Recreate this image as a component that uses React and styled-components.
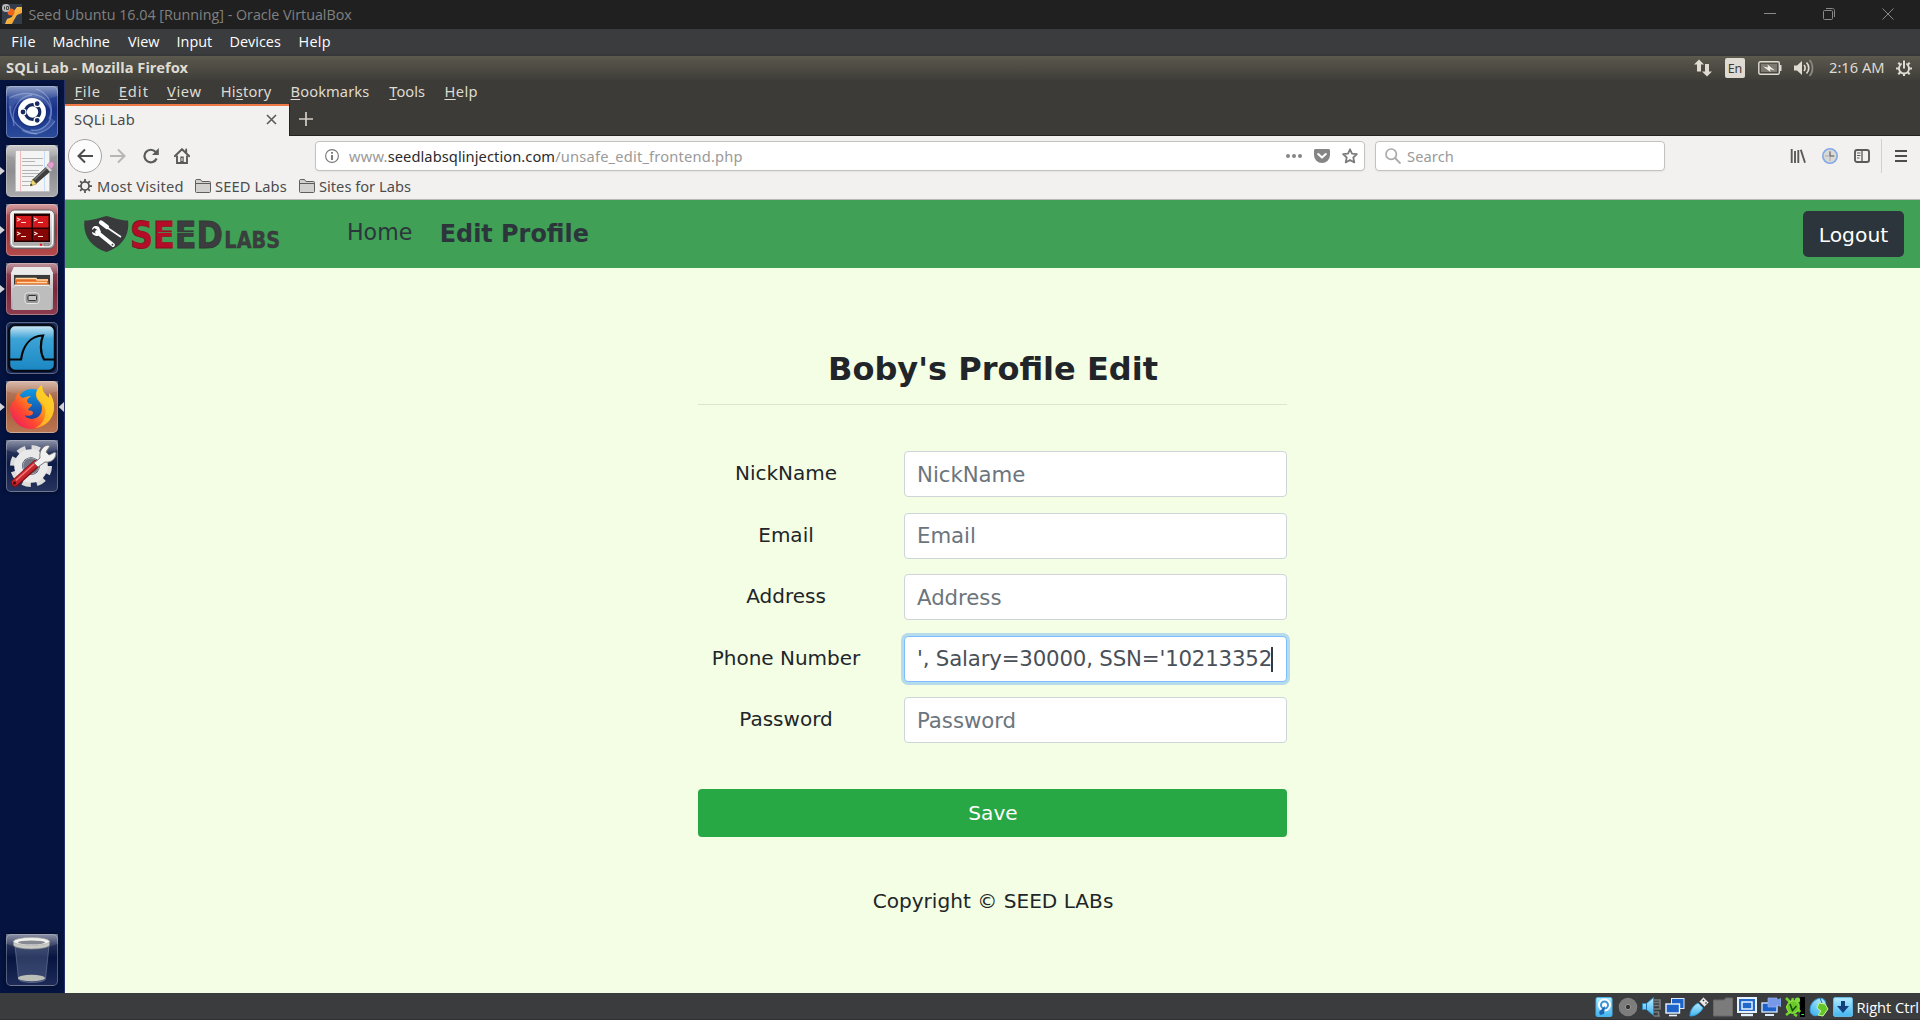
import React from "react";
import styled, { createGlobalStyle } from "styled-components";

const UI = '"Noto Sans", "Open Sans", sans-serif';
const WIN = '"Open Sans", "Noto Sans", sans-serif';
const PAGE = '"DejaVu Sans", sans-serif';

const Global = createGlobalStyle`
  *, *::before, *::after { box-sizing: border-box; }
  body { margin: 0; background: #3b3c3e; overflow: hidden; }
  svg { display: block; flex: none; }
`;

const Window = styled.div`
  width: 1920px;
  height: 1020px;
  display: flex;
  flex-direction: column;
  overflow: hidden;
  white-space: nowrap;
`;

/* host window */
const TitleBar = styled.header`
  height: 29px;
  flex: none;
  display: flex;
  align-items: center;
  padding: 0 26px 0.5px 2px;
  background: #202020;
  color: #808080;
  font: 14.3px ${WIN};
`;
const TitleText = styled.span`
  margin-left: 6.5px;
  flex: 1;
`;
const WindowButtons = styled.div`
  display: flex;
  gap: 47px;
`;
const HostMenu = styled.nav`
  height: 27px;
  flex: none;
  display: flex;
  align-items: center;
  padding: 0 0 0 11.3px;
  background: #3b3c3e;
  border-bottom: 2px solid #363739;
  color: #fff;
  font: 14.4px ${WIN};
`;
const MenuItem = styled.span`
  width: ${(p) => p.$w}px;
  letter-spacing: ${(p) => p.$ls || 0}px;
`;

/* guest desktop */
const Panel = styled.header`
  height: 24px;
  flex: none;
  display: flex;
  align-items: center;
  padding: 0 8px 2px 6px;
  background: linear-gradient(#5c594f 0, #555349 20%, #3f3e39 100%);
  color: #dfdbd2;
  font: 14.67px ${UI};
`;
const PanelTitle = styled.b`
  flex: 1;
  letter-spacing: 0.05px;
`;
const Indicators = styled.div`
  display: flex;
  align-items: center;
  svg, i { position: relative; top: 1px; }
`;
const Lang = styled.i`
  width: 20px;
  height: 20px;
  margin: 0 13px;
  border-radius: 2px;
  background: #dfdbd2;
  color: #3c3b37;
  font-size: 12.5px;
  font-style: normal;
  line-height: 21px;
  text-align: center;
`;
const Clock = styled.span`
  margin: 0 12px 0 15px;
  width: 55px;
`;
const Desktop = styled.div`
  flex: 1;
  min-height: 0;
  display: flex;
`;
const Launcher = styled.aside`
  width: 65px;
  flex: none;
  display: flex;
  flex-direction: column;
  gap: 7px;
  padding: 6px 0 7px;
  background: #04133f;
  border-right: 1px solid #27306a;
`;
const Slot = styled.div`
  height: 52px;
  display: flex;
  align-items: center;
  margin-top: ${(p) => (p.$bottom ? "auto" : 0)};
`;
const Mark = styled.span`
  width: 6px;
  height: 10px;
  flex: none;
  background: ${(p) => (p.$on ? "#d4d4d8" : "transparent")};
  clip-path: ${(p) =>
    p.$right ? "polygon(100% 0, 100% 100%, 12% 50%)" : "polygon(0 10%, 80% 50%, 0 90%)"};
`;
const Tile = styled.div`
  width: 52px;
  height: 52px;
  border-radius: 5px;
  border: 1px solid rgba(255, 255, 255, 0.28);
  background: ${(p) => p.$bg};
  box-shadow: 0 0 4px rgba(0, 0, 0, 0.5);
  svg { margin: -1px; }
`;

/* browser */
const Browser = styled.main`
  flex: 1;
  min-width: 0;
  display: flex;
  flex-direction: column;
  background: #f4fee4;
`;
const FxMenu = styled.nav`
  height: 23px;
  flex: none;
  display: flex;
  align-items: center;
  padding: 0 0 2px 9.4px;
  background: #3c3b37;
  color: #dfdbd2;
  font: 14.67px ${UI};
  u { text-underline-offset: 2px; text-decoration-thickness: 1px; }
`;
const TabStrip = styled.div`
  height: 33px;
  flex: none;
  display: flex;
  align-items: stretch;
  background: #3c3b37;
`;
const Tab = styled.div`
  width: 224px;
  display: flex;
  align-items: center;
  justify-content: space-between;
  padding: 0 12px 2px 9px;
  margin-top: 0.5px;
  border-top: 2px solid #f07746;
  background: #f2f1f0;
  color: #4c4c4c;
  font: 14.67px ${UI};
  line-height: 18px;
  letter-spacing: 0.15px;
`;
const TabLabel = styled.span`
  padding-bottom: 2px;
`;
const TabRest = styled.div`
  flex: 1;
  display: flex;
  align-items: center;
  padding: 0 0 0 9px;
  border-left: 1px solid #242320;
  border-bottom: 1px solid #242320;
`;
const Toolbar = styled.div`
  height: 38px;
  flex: none;
  display: flex;
  align-items: center;
  padding: 2px 13px 0 3px;
  background: #f2f1f0;
`;
const BackButton = styled.span`
  width: 34px;
  height: 34px;
  border-radius: 50%;
  border: 1px solid #a5a4a3;
  background: #fcfcfc;
  display: flex;
  align-items: center;
  justify-content: center;
`;
const NavIcons = styled.div`
  display: flex;
  align-items: center;
  gap: 15.5px;
  width: 213px;
  padding-left: 7px;
`;
const InputBar = styled.div`
  height: 30px;
  width: ${(p) => p.$w}px;
  margin-left: ${(p) => p.$ml || 0}px;
  display: flex;
  align-items: center;
  padding: 0 ${(p) => p.$pr || 0}px 0 9px;
  border: 1px solid #c4c2bf;
  border-radius: 4px;
  background: #fff;
  box-shadow: 0 1px 2px rgba(0, 0, 0, 0.06);
  color: #9a9a9a;
  font: 14.67px ${UI};
`;
const Url = styled.span`
  flex: 1;
  margin-left: 10px;
  letter-spacing: 0.19px;
  b { font-weight: 400; color: #2b2b2b; letter-spacing: 0.07px; }
`;
const BarIcons = styled.span`
  display: flex;
  align-items: center;
  gap: 12px;
`;
const SearchHint = styled.span`
  margin-left: 6px;
  letter-spacing: 0.1px;
`;
const RightTools = styled.div`
  margin-left: auto;
  display: flex;
  align-items: center;
  gap: 16px;
`;
const Divider = styled.span`
  width: 1px;
  height: 34px;
  margin: 0 -3px 0 -5px;
  background: #d2d1d0;
`;
const Bookmarks = styled.div`
  height: 26px;
  flex: none;
  display: flex;
  align-items: center;
  padding: 0 0 2px 13px;
  background: #f2f1f0;
  border-bottom: 1px solid #b9b8b6;
  color: #4c4c4c;
  font: 14.67px ${UI};
`;
const Bookmark = styled.span`
  display: flex;
  align-items: center;
  gap: ${(p) => p.$gap || 3}px;
  width: ${(p) => p.$w}px;
  letter-spacing: ${(p) => p.$ls}px;
`;

/* page */
const SiteNav = styled.nav`
  height: 68px;
  flex: none;
  display: flex;
  align-items: center;
  padding: 0 16px 0 19px;
  background: #40a055;
  color: #2c353c;
  font-family: ${PAGE};
`;
const HomeLink = styled.span`
  margin: -4px 27.5px 0 59px;
  font-size: 22.1px;
`;
const EditLink = styled.b`
  font-size: 23.9px;
  flex: 1;
`;
const Logout = styled.button`
  width: 101px;
  height: 46px;
  padding: 1px 0 0;
  border: 0;
  border-radius: 5px;
  background: #2c353c;
  color: #fff;
  font: 20.3px ${PAGE};
`;
const Form = styled.form`
  width: 589px;
  margin: 0 auto;
  padding-top: 82px;
  color: #212529;
  font: 20px/24px ${PAGE};
`;
const Heading = styled.h1`
  margin: 0 0 16px;
  padding-left: 1px;
  font-size: 32px;
  line-height: 38px;
  text-align: center;
`;
const Rule = styled.hr`
  margin: 0 0 46px;
  border: 0;
  height: 1px;
  background: #dbe6cd;
`;
const Row = styled.div`
  display: flex;
  justify-content: space-between;
  margin-bottom: 15.5px;
`;
const Label = styled.label`
  width: 176px;
  padding-top: 10px;
  text-align: center;
`;
const Field = styled.div`
  width: 383px;
  height: 46px;
  display: flex;
  align-items: center;
  padding: 1.4px 12px 0;
  border: 1px solid ${(p) => (p.$focus ? "#80bdff" : "#ced4da")};
  border-radius: 4px;
  background: #fff;
  box-shadow: ${(p) => (p.$focus ? "0 0 0 3px #b6dbea" : "none")};
  color: ${(p) => (p.$focus ? "#495057" : "#6c757d")};
  font-size: 21.3px;
  letter-spacing: ${(p) => (p.$focus ? -0.18 : -0.05)}px;
`;
const Caret = styled.i`
  width: 2px;
  height: 25px;
  flex: none;
  margin-left: -1px;
  background: #343a40;
`;
const Save = styled.button`
  width: 100%;
  height: 48px;
  margin-top: 30px;
  padding: 0 0 0 1px;
  border: 0;
  border-radius: 4px;
  background: #28a745;
  color: #fff;
  font: 20.1px ${PAGE};
`;
const Copyright = styled.p`
  margin: 52px 0 0;
  padding-left: 1px;
  text-align: center;
  font-size: 20.1px;
`;

const StatusBar = styled.footer`
  height: 27px;
  flex: none;
  display: flex;
  align-items: center;
  justify-content: flex-end;
  gap: 3.9px;
  padding-top: 1px;
  border-bottom: 1px solid #303132;
  background: #3b3c3e;
  color: #fff;
  font: 14.7px ${WIN};
`;
const HostKey = styled.span`
  width: 63.5px;
  letter-spacing: -0.05px;
`;

const Svg = ({ w = 16, h = w, vb, children, ...rest }) => (
  <svg width={w} height={h} viewBox={vb || `0 0 ${w} ${h}`} fill="none" {...rest}>{children}</svg>
);

const Shine = () => <ellipse cx="26" cy="0" rx="34" ry="15" fill="url(#shine)" />;

const HiddenDefs = styled.svg`
  position: absolute;
`;
const Defs = () => (
  <HiddenDefs width="0" height="0">
    <defs>
      <linearGradient id="shine" x1="0" y1="0" x2="0" y2="1"><stop offset=".4" stopColor="#fff" stopOpacity=".5" /><stop offset="1" stopColor="#fff" stopOpacity="0" /></linearGradient>
      <linearGradient id="metal" x1="0" y1="0" x2="0" y2="1"><stop offset="0" stopColor="#ededed" /><stop offset="1" stopColor="#a3a3a3" /></linearGradient>
      <linearGradient id="shark" x1="0" y1="0" x2="0" y2="1"><stop offset="0" stopColor="#d5ecf8" /><stop offset=".3" stopColor="#3ca3d6" /><stop offset="1" stopColor="#1a86c2" /></linearGradient>
      <linearGradient id="fox" x1="1" y1="0" x2="0" y2="1"><stop offset="0" stopColor="#ffe226" /><stop offset=".4" stopColor="#ff9a1a" /><stop offset=".65" stopColor="#ff4a30" /><stop offset="1" stopColor="#e4126c" /></linearGradient>
      <linearGradient id="globe" x1="0" y1="0" x2="0" y2="1"><stop offset="0" stopColor="#0a9be6" /><stop offset="1" stopColor="#1c3f9c" /></linearGradient>
      <linearGradient id="sky" x1="0" y1="0" x2="0" y2="1"><stop offset="0" stopColor="#b5ebff" /><stop offset="1" stopColor="#41b4ee" /></linearGradient>
      <linearGradient id="vbox" x1="0" y1="0" x2="1" y2="1"><stop offset="0" stopColor="#ffdc70" /><stop offset="1" stopColor="#f08a15" /></linearGradient>
    </defs>
  </HiddenDefs>
);

const DashIcon = () => (
  <Svg w={52}>
    <g stroke="#a9bde6" strokeOpacity=".45" strokeWidth="1.3">
      <path d="M3 12C18 4 42 6 45 24c2 14-10 22-20 20M8 40C4 22 14 10 26 9M49 35C42 46 28 52 16 44" />
      <path d="M30 3c13 4 19 18 13 30M4 20c-1 16 12 26 27 28" />
    </g>
    <path d="M3 12C18 4 42 6 45 24c-6-10-20-14-34-8 -4 4-5 8-5 15C3 25 2 18 3 12zM49 35C42 46 28 52 16 44c10 2 24-1 29-12z" fill="#9db5e6" fillOpacity=".22" />
    <circle cx="26" cy="26.5" r="15" fill="#0a1c55" fillOpacity=".35" />
    <circle cx="26" cy="26" r="14" fill="#fff" />
    <circle cx="26.5" cy="26" r="7.3" stroke="#172b63" strokeWidth="3.2" />
    <g fill="#172b63" stroke="#fff" strokeWidth="1.2"><circle cx="17" cy="26" r="3" /><circle cx="31.2" cy="17.7" r="3" /><circle cx="31.2" cy="34.3" r="3" /></g>
    <Shine />
  </Svg>
);
const EditorIcon = () => (
  <Svg w={52}>
    <Shine />
    <rect x="9.5" y="5.5" width="34" height="41" fill="#f4f4f4" stroke="#bfbfbf" />
    <path d="M14.5 6v40" stroke="#f6b9b9" /><path d="M38.5 6v40" stroke="#c5def5" />
    <path d="M16 13.5h21M16 16.5h13M16 20.5h21M16 25.5h17M16 28.5h18M16 31.5h12M16 36.5h11M16 40.5h7" stroke="#b4b4b4" />
    <path d="M26 35l15-14 4 5-15 13z" fill="#3e3e3e" /><path d="M28.5 34.5l13.500-12.500" stroke="#777" strokeWidth="1.5" />
    <path d="M24 41l2.500-6.500 4 4.500z" fill="#f0dc75" stroke="#8f8130" strokeWidth=".6" /><path d="M24 41l1-2.600 1.600 1.800z" fill="#222" />
    <path d="M39.5 22l2-2 4.500 5-2 2z" fill="#d5d5d5" /><path d="M41 20c2-3 5-4 6-3 1.600 1 1.600 4-1.500 7z" fill="#e3a0cf" stroke="#b06d9c" strokeWidth=".6" />
  </Svg>
);
const TerminalIcon = () => (
  <Svg w={52}>
    <Shine />
    <rect x="3.5" y="6" width="45" height="38.5" rx="5" fill="url(#metal)" stroke="#646464" />
    <rect x="5.5" y="8" width="41" height="34.5" rx="4" stroke="#f7f7f7" strokeWidth="1.3" />
    <rect x="8" y="9.5" width="36" height="28.5" fill="#240000" />
    <path d="M10 12h15.500v11.500H10zM27 12h15.500v11.500H27z" fill="#d3191c" /><path d="M10 25h15.500v11.500H10zM27 25h15.500v11.500H27z" fill="#850404" />
    <path d="M11 14l3 1.500-3 1.500M15 18.500h5M28 14l3 1.500-3 1.500M32 18.500h5M11 28l3 1.500-3 1.500M15 32.500h5M28 28l3 1.500-3 1.500M32 32.500h5" stroke="#ffdede" strokeWidth="1.1" />
    <circle cx="35" cy="40.7" r="1.2" fill="#f11" /><path d="M38 39.700h5v2h-5z" stroke="#777" strokeWidth=".7" />
  </Svg>
);
const FilesIcon = () => (
  <Svg w={52}>
    <Shine />
    <path d="M8 4h36l3 6v36H5V10z" fill="url(#metal)" /><path d="M8 4h36l3 7H5z" fill="#eaeaea" />
    <rect x="8" y="12" width="36" height="12" fill="#3a3a3a" />
    <path d="M9 16h33l1 8H9z" fill="#e66a1f" /><path d="M9.500 15.500H30l1 1.500h11M11 19.500h30" stroke="#ffd9a8" strokeWidth="1.3" />
    <path d="M6.500 24.500c0-3 1.500-3 3-3h33c2 0 3 0 3 3V47h-39z" fill="#bdbdbd" /><path d="M7 24.500l2-2h34l2 2" stroke="#efefef" />
    <rect x="19" y="30" width="14" height="10.5" rx="2.5" fill="#989898" stroke="#e9e9e9" /><rect x="22" y="32.5" width="8.5" height="5" rx="1" fill="#c4c4c4" stroke="#353535" />
  </Svg>
);
const SharkIcon = () => (
  <Svg w={52}>
    <rect x="3" y="3" width="46" height="46" rx="6" fill="url(#shark)" stroke="#070b16" strokeWidth="2.5" />
    <path d="M3 37.500h12C17 24 24 14 37 13.500c-3 7-3 17 1 24h11" stroke="#070707" strokeWidth="2.2" />
  </Svg>
);
const FirefoxIcon = () => (
  <Svg w={52}>
    <Shine />
    <circle cx="26" cy="23" r="15" fill="url(#globe)" />
    <path d="M36 4c-6 4-7 9-5 14 2 3 5 5 5 9 0 7-5 11-10 11-4 0-7-2-7-4 4 2 8 0 8-2 0-3-4-2-5-3 1-3 4-3 4-6-3 0-5-1-5-4 1-2 3-3 4-4-3 0-6 1-8 2-3-1-4-3-4-6-2 2-4 5-4 8C5 22 3 26 5 33c3 9 11 15 20 15 13 0 23-9 23-22 0-6-2-11-5-14v5c-3-3-7-6-7-13z" fill="url(#fox)" />
    <path d="M36 4c-6 4-7 9-4 14 4 5 9 7 7 17-1 5-5 10-10 12 11-1 19-10 19-21 0-6-2-11-5-14v5c-3-3-7-6-7-13z" fill="#ffd42a" fillOpacity=".7" />
  </Svg>
);
const SettingsIcon = () => (
  <Svg w={52}>
    <Shine />
    <circle cx="25" cy="26" r="18.5" stroke="#dcdcdc" strokeWidth="5" strokeDasharray="8.5 6.03" />
    <circle cx="25" cy="26" r="12.8" stroke="#e9e9e9" strokeWidth="8" /><circle cx="25" cy="26" r="8" stroke="#a8a8a8" fill="#707684" />
    <path d="M9 43L30 24" stroke="#7d1118" strokeWidth="8" strokeLinecap="round" /><path d="M9 42.500L30 23.500" stroke="#c9252c" strokeWidth="6" strokeLinecap="round" />
    <path d="M10 40.500L28 24" stroke="#ee7b7d" strokeWidth="1.5" /><circle cx="8.5" cy="43" r="1.6" fill="#3d0a0d" />
    <path d="M28 23l6-5c-1-6 2-12 8-13l2 1-4 6 3 3 6-3 1 1c0 6-5 10-11 9l-7 5z" fill="#f1f1f1" stroke="#777" />
  </Svg>
);
const TrashIcon = () => (
  <Svg w={52}>
    <Shine />
    <path d="M9 12h34l-3.500 33a13.500 3.500 0 0 1-27 0z" fill="#9ba9c9" fillOpacity=".26" stroke="#aab4cc" strokeOpacity=".35" />
    <ellipse cx="25.5" cy="44" rx="13.5" ry="3.3" fill="#bebeb9" />
    <path d="M7.500 7.500v3.500a18 4 0 0 0 36 0V7.500z" fill="#c9c9c6" stroke="#8e8e8c" strokeWidth=".7" />
    <ellipse cx="25.5" cy="7.5" rx="18" ry="4" fill="#f0f0ed" stroke="#acacaa" strokeWidth=".7" /><ellipse cx="25.5" cy="8.5" rx="13.5" ry="2" fill="#868991" />
  </Svg>
);

const launcher = [
  [DashIcon, "linear-gradient(#3a569c,#17308a 45%,#2b4b9a)", 0, 0],
  [EditorIcon, "linear-gradient(#aaa9ab,#8e8d91 50%,#a9a8aa)", 1, 0],
  [TerminalIcon, "linear-gradient(#b4575c,#a13238 50%,#b44a4c)", 1, 0],
  [FilesIcon, "linear-gradient(#8f4757,#79283a 50%,#8c3c4e)", 1, 0],
  [SharkIcon, "#1b2b5b", 0, 0],
  [FirefoxIcon, "linear-gradient(#b98871,#a45c3a 50%,#b97652)", 1, 1],
  [SettingsIcon, "linear-gradient(#3a4468,#0c1a46 45%,#27345e)", 0, 0],
];

const Logo = () => (
  <Svg w={204} h={60}>
    <g transform="translate(0 11)">
      <path d="M.5 5.500C9 5.500 15 3 22.500 1 30 3 36 5.500 44 5.500 46 20 38 32 22.500 37 7 32-1.500 20 .5 5.500z" fill="#383a3c" />
      <path d="M17 7.500l6 4.500" stroke="#fff" strokeWidth="4.2" strokeLinecap="round" /><path d="M23 12.500l14 9.500" stroke="#fff" strokeWidth="1.6" />
      <path d="M13 17l16 13" stroke="#fff" strokeWidth="3.8" strokeLinecap="round" /><path d="M8 15c0-4 4-5 7-3l2 5-3 4c-4 0-6-2-6-4l4 1.500 2-3L10.500 13z" fill="#fff" /><circle cx="28.5" cy="29.7" r=".9" fill="#383a3c" />
    </g>
    <g transform="scale(.838 1)" fontFamily="DejaVu Sans, sans-serif" fontWeight="700">
      <text x="54.9" y="43.7" fontSize="38" fill="#3b3d3f" stroke="#2f3a34" strokeWidth=".8"><tspan fill="#b50d28" stroke="#8c1022">SE</tspan>ED</text>
      <text x="167.5" y="43.7" fontSize="23" fill="#3b3d3f" stroke="#2f3a34" strokeWidth=".4">LABS</text>
    </g>
    <path d="M74 28.500h41" stroke="#40a055" strokeOpacity=".75" />
  </Svg>
);

const FolderIcon = () => (
  <Svg w={16} h={14}><path d="M.5 12.500V1.500C.5 1 1 .5 1.500.5h4l1.500 2h7.500c.6 0 1 .4 1 1v9c0 .6-.4 1-1 1h-13c-.6 0-1-.4-1-1zM.5 4.500h15" fill="#d2d1cf" stroke="#5e5e5e" /></Svg>
);
const PowerGear = () => (
  <Svg w={16}>
    <circle cx="8" cy="8.5" r="5" stroke="#dfdbd2" strokeWidth="1.9" />
    <path d="M8 13v3M0 8.500h3M13 8.500h3M2.300 2.800l2 2M11.700 12.200l2 2M13.700 2.800l-2 2M4.300 12.200l-2 2" stroke="#dfdbd2" strokeWidth="2.1" />
    <path d="M8 0v9" stroke="#4b4942" strokeWidth="4.5" /><path d="M8 .5v8" stroke="#dfdbd2" strokeWidth="2" />
  </Svg>
);

const fields = ["NickName", "Email", "Address", "Phone Number", "Password"];

export default function App() {
  return (
    <Window>
      <Global />
      <Defs />
      <TitleBar>
        <Svg w={20}>
          <rect width="20" height="20" fill="#343d4c" /><path d="M3 20l2-5 5-2 2-6 3-4h5v6l-5 2-3 5-2 4z" fill="url(#vbox)" />
          <circle cx="9" cy="8" r="3.5" fill="#ef641b" /><circle cx="4" cy="4" r="4" fill="#b8b8b8" /><path d="M2.500 2.500v3M4.500 2.500h2v3h-2z" stroke="#444" />
        </Svg>
        <TitleText>Seed Ubuntu 16.04 [Running] - Oracle VirtualBox</TitleText>
        <WindowButtons>
          <Svg w={12}><path d="M0 5.500h12" stroke="#8a8a8a" /></Svg>
          <Svg w={12}><path d="M.5 3.500c0-.6.4-1 1-1h7c.6 0 1 .4 1 1v7c0 .6-.4 1-1 1h-7c-.6 0-1-.4-1-1zM3 .5h6.500c1.200 0 2 .8 2 2V9" stroke="#8a8a8a" /></Svg>
          <Svg w={12}><path d="M.5.5l11 11M11.500.5l-11 11" stroke="#8a8a8a" /></Svg>
        </WindowButtons>
      </TitleBar>
      <HostMenu>
        <MenuItem $w={41.3} $ls={0.5}>File</MenuItem>
        <MenuItem $w={75.4}>Machine</MenuItem>
        <MenuItem $w={48.6}>View</MenuItem>
        <MenuItem $w={53}>Input</MenuItem>
        <MenuItem $w={69}>Devices</MenuItem>
        <MenuItem $w={40} $ls={0.3}>Help</MenuItem>
      </HostMenu>
      <Panel>
        <PanelTitle>SQLi Lab - Mozilla Firefox</PanelTitle>
        <Indicators>
          <Svg w={18}><path d="M5 .500l5 5H7v7H3v-7H0zM13 17.500l-5-5h3V5h4v7.500h3z" fill="#dfdbd2" /></Svg>
          <Lang>En</Lang>
          <Svg w={24} h={14}>
            <rect x=".8" y=".8" width="20.5" height="12.4" rx="1.5" stroke="#dfdbd2" strokeWidth="1.4" /><rect x="3" y="3" width="16" height="8" fill="#7d7a72" /><path d="M22.500 4v6" stroke="#dfdbd2" strokeWidth="2" />
            <path d="M5 5.500l5 1-.5-3L17 9.500l-5-1.200.5 2.700z" fill="#f1ede4" />
          </Svg>
          <Svg w={32} h={18} vb="-12 0 32 18"><path d="M0 6.500h3l5-4.500v14l-5-4.500H0z" fill="#dfdbd2" /><path d="M10 6c1.500 1.500 1.500 4.500 0 6M12.500 3.500c3 3 3 8 0 11" stroke="#dfdbd2" strokeWidth="1.7" /><path d="M15.500 1c4 4 4 12 0 16" stroke="#8b887f" strokeWidth="1.7" /></Svg>
          <Clock>2:16 AM</Clock>
          <PowerGear />
        </Indicators>
      </Panel>
      <Desktop>
        <Launcher>
          {launcher.map(([Icon, bg, left, right], i) => (
            <Slot key={i}><Mark $on={left} /><Tile $bg={bg}><Icon /></Tile><Mark $on={right} $right /></Slot>
          ))}
          <Slot $bottom><Mark /><Tile $bg="linear-gradient(#3a4468,#06143f 45%,#1d2a58)"><TrashIcon /></Tile></Slot>
        </Launcher>
        <Browser>
          <FxMenu>
            <MenuItem $w={44.3} $ls={0.7}><u>F</u>ile</MenuItem>
            <MenuItem $w={48.4} $ls={1}><u>E</u>dit</MenuItem>
            <MenuItem $w={53.6} $ls={0.6}><u>V</u>iew</MenuItem>
            <MenuItem $w={69.9} $ls={0.2}>Hi<u>s</u>tory</MenuItem>
            <MenuItem $w={98.8} $ls={0.1}><u>B</u>ookmarks</MenuItem>
            <MenuItem $w={55.1}><u>T</u>ools</MenuItem>
            <MenuItem $w={40} $ls={0.4}><u>H</u>elp</MenuItem>
          </FxMenu>
          <TabStrip>
            <Tab><TabLabel>SQLi Lab</TabLabel><Svg w={11}><path d="M1 1l9 9M10 1l-9 9" stroke="#5a5a5a" strokeWidth="1.6" /></Svg></Tab>
            <TabRest><Svg w={14}><path d="M7 0v14M0 7h14" stroke="#d3cfc6" strokeWidth="1.7" /></Svg></TabRest>
          </TabStrip>
          <Toolbar>
            <BackButton><Svg w={18}><path d="M17 9H2.500M9 2.500L2.500 9 9 15.500" stroke="#4c4c4c" strokeWidth="2" /></Svg></BackButton>
            <NavIcons>
              <Svg w={18}><path d="M1 9h14.500M9 2.500L15.500 9 9 15.500" stroke="#b7b6b5" strokeWidth="2" /></Svg>
              <Svg w={16}><path d="M13.600 10.500A6.300 6.300 0 1 1 12.600 4" stroke="#5a5a5a" strokeWidth="2.2" /><path d="M15.800 0v7H9z" fill="#5a5a5a" /></Svg>
              <Svg w={16}><path d="M.7 8.200L8 1.200l7.300 7M12.200 4.500V1.500" stroke="#5a5a5a" strokeWidth="1.9" strokeLinecap="round" /><path d="M3 7.500V15h10V7.500" stroke="#5a5a5a" strokeWidth="1.9" /><path d="M6.300 15V8.500h3.400V15z" fill="#5a5a5a" /><path d="M8 10v3" stroke="#f2f1f0" /></Svg>
            </NavIcons>
            <InputBar $w={1050} $pr={6}>
              <Svg w={14}><circle cx="7" cy="7" r="6.4" stroke="#777" strokeWidth="1.1" /><path d="M7 3v1.800M7 6v5" stroke="#777" strokeWidth="1.9" /></Svg>
              <Url>www.<b>seedlabsqlinjection.com</b>/unsafe_edit_frontend.php</Url>
              <BarIcons>
                <Svg w={16}><g fill="#858585"><circle cx="2" cy="8" r="2" /><circle cx="8" cy="8" r="2" /><circle cx="14" cy="8" r="2" /></g></Svg>
                <Svg w={16}><path d="M1.500 1h13c.8 0 1.500.7 1.500 1.500V7a8 8 0 0 1-16 0V2.500C0 1.700.7 1 1.500 1z" fill="#858585" /><path d="M4.200 6L8 9.600 11.800 6" stroke="#fff" strokeWidth="2" strokeLinecap="round" strokeLinejoin="round" /></Svg>
                <Svg w={16}><path d="M8 1.300l2 4.400 4.900.5-3.600 3.300 1 4.900L8 12l-4.300 2.400 1-4.900L1.100 6.200 6 5.700z" stroke="#7c7c7c" strokeWidth="1.8" strokeLinejoin="round" /></Svg>
              </BarIcons>
            </InputBar>
            <InputBar $w={290} $ml={10}>
              <Svg w={16}><circle cx="6.2" cy="6.2" r="5.2" stroke="#aaa" strokeWidth="1.7" /><path d="M10 10l5.500 5.500" stroke="#aaa" strokeWidth="1.9" /></Svg>
              <SearchHint>Search</SearchHint>
            </InputBar>
            <RightTools>
              <Svg w={16}><path d="M1.700 1v14M5 3v12M8.300 2v13M10.800 1.800L15 14.800" stroke="#5a5a5a" strokeWidth="1.9" /></Svg>
              <Svg w={16}><circle cx="8" cy="8" r="7.2" fill="#d9d9d6" stroke="#83a8e6" strokeWidth="1.6" /><path d="M8 3v10M3 8h10" stroke="#aaa" /><path d="M8 3.500V8h4" stroke="#666" /></Svg>
              <Svg w={16}><rect x="1" y="2" width="14" height="12" rx="2" stroke="#5a5a5a" strokeWidth="1.9" /><path d="M8 2v12" stroke="#5a5a5a" strokeWidth="1.3" /><path d="M3 5h3.500M3 7.500h3.500M3 10h2.500" stroke="#5a5a5a" /></Svg>
              <Divider />
              <Svg w={12} h={12}><path d="M0 1h12M0 6h12M0 11h12" stroke="#4c4c4c" strokeWidth="2" /></Svg>
            </RightTools>
          </Toolbar>
          <Bookmarks>
            <Bookmark $w={117} $ls={0.2} $gap={5}><Svg w={14} vb="0 0 16 16"><circle cx="8" cy="8" r="4.6" stroke="#555" strokeWidth="2" /><path d="M8 0v3.500M8 12.500V16M0 8h3.500M12.500 8H16M2.400 2.400l2 2M11.600 11.600l2 2M13.600 2.400l-2 2M4.400 11.600l-2 2" stroke="#555" strokeWidth="2" /></Svg>Most Visited</Bookmark>
            <Bookmark $w={104} $ls={0.12} $gap={4}><FolderIcon />SEED Labs</Bookmark>
            <Bookmark $w={120} $ls={0} $gap={4}><FolderIcon />Sites for Labs</Bookmark>
          </Bookmarks>
          <SiteNav>
            <Logo />
            <HomeLink>Home</HomeLink>
            <EditLink>Edit Profile</EditLink>
            <Logout>Logout</Logout>
          </SiteNav>
          <Form>
            <Heading>Boby's Profile Edit</Heading>
            <Rule />
            {fields.map((name) => {
              const focus = name === "Phone Number";
              return (
                <Row key={name}>
                  <Label>{name}</Label>
                  <Field $focus={focus}>{focus ? "', Salary=30000, SSN='10213352" : name}{focus && <Caret />}</Field>
                </Row>
              );
            })}
            <Save type="button">Save</Save>
            <Copyright>Copyright © SEED LABs</Copyright>
          </Form>
        </Browser>
      </Desktop>
      <StatusBar>
        <Svg w={20}><rect x="2" y=".5" width="16" height="19" rx="1.5" fill="url(#sky)" stroke="#4bb4e8" /><circle cx="10.5" cy="8" r="5.5" fill="#3b95d4" stroke="#fff" strokeWidth="2" /><circle cx="10.5" cy="8" r="2.5" fill="#fff" /><path d="M11 9l-6 6 1 3 4-1z" fill="#1d66b8" /></Svg>
        <Svg w={20}><circle cx="10" cy="10" r="9.3" fill="#7d7d7d" /><circle cx="10" cy="10" r="2.7" fill="#333" stroke="#999" /></Svg>
        <Svg w={20}><path d="M12 3h7v9h-7M13 5.500h6M13 8.500h6M13 15h4.500v4M13 19h6" stroke="#77797b" strokeWidth="1.7" /><path d="M1.500 6.500h4L12.500.5v18l-7-6h-4z" fill="url(#sky)" stroke="#2c8cc6" strokeWidth=".8" /><path d="M5.500 6.500v6" stroke="#1d6fb0" /></Svg>
        <Svg w={20}><rect x="6.5" y="1.5" width="12.5" height="10" fill="#1d64ca" stroke="#dcecff" /><rect x="1" y="7" width="13.5" height="9" fill="#1d64ca" stroke="#e8f3ff" strokeWidth="1.4" /><path d="M4 18.500h8" stroke="#e8f3ff" strokeWidth="1.6" /></Svg>
        <Svg w={20}><path d="M1 19c0-5 2-8 5-11l3-2 5 5-2 3c-3 3-6 5-11 5z" fill="url(#sky)" stroke="#39a2dd" /><path d="M10.500 4.500l4-4 5 5-4 4z" fill="#e9e9e9" stroke="#999" strokeWidth=".6" /><path d="M14 3l1 1M16.500 5.500l1 1" stroke="#333" strokeWidth="1.5" /></Svg>
        <Svg w={20}><path d="M.5 19V3h11l1-2h7v18z" fill="#7b7b7b" stroke="#696969" /></Svg>
        <Svg w={20}><path d="M1 1h18v14H1z" fill="#2169cc" stroke="#e6f2ff" strokeWidth="2" /><rect x="5" y="5" width="10" height="7" stroke="#e6f2ff" strokeWidth="1.5" /><path d="M4 18h12" stroke="#e6f2ff" strokeWidth="2.4" /></Svg>
        <Svg w={20}><rect x="1" y="6" width="15" height="9" fill="#1c60c8" stroke="#dcebff" strokeWidth="1.3" /><path d="M4 18h9" stroke="#dcebff" strokeWidth="2" /><path d="M7 1h9v2l4-1.500v8L16 8v2H7z" fill="#7898e8" stroke="#95b2f5" strokeWidth=".7" /></Svg>
        <Svg w={20}><rect x="15" width="5" height="20" fill="#000" /><path d="M16.500 17.500H19" stroke="#3f3" /><path d="M1 1l4 4M1 10h3M1 18l4-3M9 17l3 2M7 5L8 1M13 12l2 3" stroke="#6fd42c" strokeWidth="2.6" /><ellipse cx="8" cy="10" rx="6" ry="6.5" fill="#6bc92a" stroke="#8eec46" transform="rotate(40 8 10)" /><circle cx="12.5" cy="3" r="2.6" fill="#7fe038" /><path d="M5 7l2.500 6.500L11.500 9" stroke="#164b08" strokeWidth="1.5" /></Svg>
        <Svg w={20}><ellipse cx="9" cy="10" rx="7" ry="9.5" fill="url(#sky)" stroke="#3ca1d9" transform="rotate(35 9 10)" /><path d="M11 1l2 5" stroke="#1d6fb0" /><path d="M10 6l6 1 3 5-5 7-5-1 3-4-4-3z" fill="#64c529" stroke="#c6f79d" /></Svg>
        <Svg w={20}><rect x=".7" y=".7" width="18.6" height="18.6" rx="1" fill="url(#sky)" stroke="#6dccfa" /><path d="M8 4h4v5h4l-6 7-6-7h4z" fill="#123e7c" /></Svg>
        <HostKey>Right Ctrl</HostKey>
      </StatusBar>
    </Window>
  );
}
